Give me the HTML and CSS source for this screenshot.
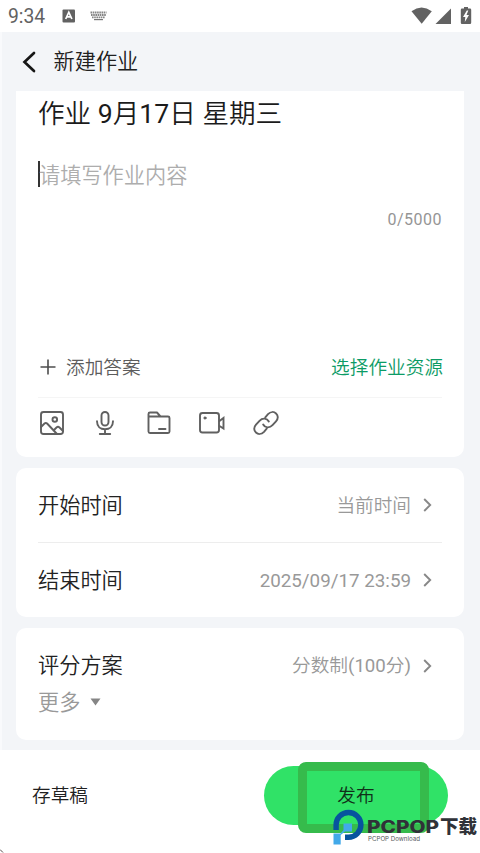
FILE: index.html
```html
<!DOCTYPE html>
<html lang="zh-CN">
<head>
<meta charset="utf-8">
<title>新建作业</title>
<link rel="stylesheet" href="styles.css">
</head>
<body>
<div class="screen">
  <div class="status">
    <span class="clock">9:34</span>
    <svg class="status-app" width="14" height="14" viewBox="0 0 14 14"><rect x=".5" y=".5" width="12.5" height="13" rx="1" fill="#626262"/><path d="M3.7 10 6.8 3.2 9.9 10M5 7.8h3.6" fill="none" stroke="#fff" stroke-width="1.7"/></svg>
    <svg class="status-keys" width="17" height="10" viewBox="0 0 17 10"><path d="M.5 1.5h16M1 4h15M2 6.400h13" stroke="#858585" stroke-width="1.800" stroke-dasharray="1.600 .6"/><path d="M4 8.600h9" stroke="#777" stroke-width="1.200"/></svg>
    <span class="spacer"></span>
    <svg width="68" height="20" viewBox="0 0 68 20" fill="#626262"><path d="M1.500 5.200Q11.500-2.200 21.800 5.200L11.700 17.800Z"/><path d="M25.500 18 41 2.500V18Z"/><path d="M54 1h4v1.500h2q1.200 0 1.200 1.200v13q0 1.300-1.200 1.300h-8q-1.200 0-1.200-1.300V3.700q0-1.200 1.200-1.200h2Z"/><path d="M56.800 4.500 53 11h2.300l-.5 5L59 9h-2.500l1.800-4.500Z" fill="#fff"/></svg>
  </div>
  <div class="page">
    <header class="header">
      <svg width="14" height="22" viewBox="0 0 14 22"><path d="M12 2 2.500 11 12 20" fill="none" stroke="#161616" stroke-width="2.700" stroke-linecap="round"/></svg>
      <span>新建作业</span>
    </header>
    <main class="cards">
      <section class="card editor">
        <div class="title">作业 9月17日 星期三</div>
        <div class="placeholder"><span>请填写作业内容</span></div>
        <div class="count">0/5000</div>
        <div class="answer">
          <svg width="16" height="16" viewBox="0 0 16 16"><path d="M8 .5v15M.5 8h15" stroke="#4d4d4d" stroke-width="1.600"/></svg>
          <span>添加答案</span>
          <span class="resource">选择作业资源</span>
        </div>
        <div class="tools">
          <svg viewBox="0 0 28 28"><rect x="3" y="3" width="22" height="22" rx="2.500"/><circle cx="16.800" cy="10.500" r="2.300"/><path d="m3 18 3.500-3.500q1.300-1.200 2.600 0L19 25M15.500 21.500l3-3q1.500-1.300 3 0L25 22"/></svg>
          <svg viewBox="0 0 28 28"><rect x="10.500" y="3" width="7" height="13.500" rx="3.500"/><path d="M6 12.300c0 5.300 3.500 8 8 8s8-2.700 8-8M14 20.300V25M8.800 25h10.400"/></svg>
          <svg viewBox="0 0 28 28"><path d="M3.500 7.500V5q0-1.500 1.500-1.500h7L15.500 7.500H23q1.500 0 1.500 1.500v13.500q0 1.500-1.500 1.500H5q-1.500 0-1.500-1.500ZM3.500 7.500h12M14 20h6.500"/></svg>
          <svg viewBox="0 0 28 28"><rect x="2" y="4" width="19" height="19.500" rx="2.500"/><circle cx="7" cy="9" r="1.100" fill="#505050" stroke-width="1"/><path d="m21.500 12 4-3v10.500L21.500 17" stroke-linejoin="miter"/></svg>
          <svg viewBox="0 0 28 28"><path d="M13.300 8.300 16 5.200c5.500-5.800 13.300 1.500 8 7.200l-3.500 3.800c-3 3.200-7.500 2.800-9.300-.7M14.700 19.700 12 22.800c-5.500 5.800-13.300-1.500-8-7.200l3.500-3.800c3-3.200 7.500-2.800 9.300.7"/></svg>
        </div>
      </section>
      <section class="card times">
        <div class="row"><span class="label">开始时间</span><span class="value">当前时间</span><svg class="chevron" viewBox="0 0 9 14"><path d="m1.200 1 6 6-6 6"/></svg></div>
        <div class="row"><span class="label">结束时间</span><span class="value end-time">2025/09/17 23:59</span><svg class="chevron" viewBox="0 0 9 14"><path d="m1.200 1 6 6-6 6"/></svg></div>
      </section>
      <section class="card grading">
        <div class="row"><span>评分方案</span><span class="value">分数制(100分)</span><svg class="chevron" viewBox="0 0 9 14"><path d="m1.200 1 6 6-6 6"/></svg></div>
        <div class="more"><span>更多</span><svg width="11" height="8" viewBox="0 0 11 8"><path d="M.5.500h10L5.500 7.500Z" fill="#858585"/></svg></div>
      </section>
    </main>
  </div>
  <footer class="footer">
    <span class="draft">存草稿</span>
    <div class="publish">发布<div class="highlight"></div></div>
  </footer>
  <svg class="brand" width="152" height="42" viewBox="0 0 152 42">
    <path d="M8.100 22V17A12.400 12.400 0 1 1 20.500 29.300H17" fill="none" stroke="#07549e" stroke-width="5.400"/>
    <path d="M15.500 15.500h8.500v8h-7l-4.300 3.500v9.500H5.500V25.500h7l3-3.500Z" fill="#42a9e9"/>
    <text class="brand-main" x="39" y="25" textLength="72" lengthAdjust="spacingAndGlyphs">PCPOP</text>
    <text class="brand-cn" x="112" y="25" textLength="37" lengthAdjust="spacingAndGlyphs">下载</text>
    <text class="brand-sub" x="40" y="32.500" textLength="52" lengthAdjust="spacingAndGlyphs">PCPOP Download</text>
  </svg>
  <svg class="corner" width="4" height="5" viewBox="0 0 4 5"><path d="M0 1.500 3 4.500" stroke="#594b4b" stroke-width="1"/></svg>
</div>
</body>
</html>
```
FILE: styles.css
```css
* { box-sizing: border-box; }
body { margin: 0; background: #fff; font-family: Roboto, "Noto Sans CJK SC DemiLight", "Noto Sans CJK SC", sans-serif; color: #202020; }
svg { display: block; flex: none; }
.screen { position: relative; width: 480px; height: 853px; overflow: hidden; display: flex; flex-direction: column; }
.status { height: 32px; flex: none; display: flex; align-items: center; padding: 0 2px 0 8px; }
.clock { font-size: 19.300px; color: #626262; width: 54px; line-height: 32px; padding-top: 1px; }
.status-keys { margin-left: 14px; }
.spacer { flex: 1; }
.page { height: 718px; flex: none; background: #f3f5f8; border-left: 2px solid #f9fafc; }
.header { height: 59px; display: flex; align-items: center; gap: 18px; padding-left: 19.500px; font-size: 21.200px; line-height: 30px; }
.cards { display: flex; flex-direction: column; gap: 11px; padding: 0 16px 0 14px; }
.card { background: #fff; border-radius: 10px; padding: 0 22px; }
.editor { height: 366px; border-radius: 0 0 10px 10px; }
.title { height: 44px; font-size: 26.600px; line-height: 46px; color: #1b1b1b; white-space: nowrap; }
.placeholder { margin-top: 26px; height: 26px; border-left: 2px solid #333; font-size: 21.200px; line-height: 29px; color: #adadad; }
.placeholder span { margin-left: -1px; }
.count { margin-top: 22px; height: 20px; line-height: 22px; font-size: 16px; letter-spacing: .5px; text-align: right; color: #959595; }
.answer { margin-top: 108px; height: 58px; display: flex; align-items: center; gap: 10px; padding: 0 0 1px 2px; font-size: 18.670px; color: #5c5c5c; }
.answer svg { margin-top: 2px; }
.resource { margin-left: auto; margin-right: -1px; color: #0c9b65; }
.tools { margin-top: 2px; border-top: 1px solid #f5f5f5; height: 50px; display: flex; align-items: center; gap: 25.400px; }
.tools svg { width: 28px; height: 28px; fill: none; stroke: #606060; stroke-width: 1.900; stroke-linecap: round; stroke-linejoin: round; }
.times { height: 149px; }
.row { height: 74px; display: flex; align-items: center; font-size: 21.200px; line-height: 30px; color: #222; }
.times .row + .row { border-top: 1px solid #ededed; height: 75px; }
.label { padding-top: 2px; }
.value { margin-left: auto; font-size: 18.670px; color: #999; }
.times .value { padding-top: 1px; }
.end-time { font-size: 18.800px; }
.chevron { width: 9px; height: 14px; margin: 0 10px 0 12px; fill: none; stroke: #888; stroke-width: 1.900; }
.grading { height: 112px; }
.grading .row { height: 56px; padding-top: 19px; }
.more { height: 36px; display: flex; align-items: center; gap: 10px; font-size: 21.200px; line-height: 30px; color: #999; }
.more span { padding-top: 2px; }
.footer { height: 103px; display: flex; align-items: flex-start; justify-content: space-between; padding: 16px 32px; font-size: 18.670px; line-height: 61px; }
.publish { position: relative; width: 184px; height: 59px; border-radius: 30px; background: #30e267; text-align: center; color: #102f19; }
.highlight { position: absolute; left: 34px; top: -4px; width: 131px; height: 71px; border: 9px solid #36bb4c; border-radius: 8px; }
.brand { position: absolute; left: 328px; top: 808px; }
.brand-main { font: 800 17px Inter, sans-serif; fill: #303238; }
.brand-cn { font: 900 18px "Noto Sans CJK SC", sans-serif; fill: #303238; }
.brand-sub { font: 5.500px Inter, sans-serif; fill: #55585a; }
.corner { position: absolute; left: 0; bottom: 0; }
```
